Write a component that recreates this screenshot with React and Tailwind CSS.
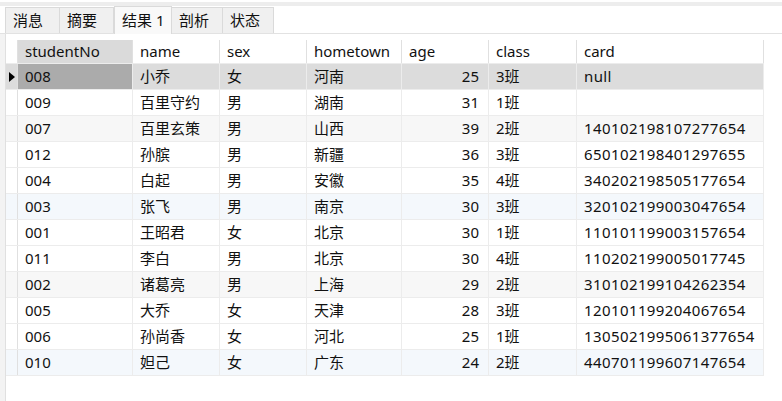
const cols = [
  { key: 'studentNo', w: 'w-[115px]' },
  { key: 'name', w: 'w-[87px]' },
  { key: 'sex', w: 'w-[87px]' },
  { key: 'hometown', w: 'w-[95px]' },
  { key: 'age', w: 'w-[87px]', right: true },
  { key: 'class', w: 'w-[88px]' },
  { key: 'card', w: 'w-[187px]' },
]

const rows = [
  ['008', '小乔', '女', '河南', '25', '3班', 'null'],
  ['009', '百里守约', '男', '湖南', '31', '1班', ''],
  ['007', '百里玄策', '男', '山西', '39', '2班', '140102198107277654'],
  ['012', '孙膑', '男', '新疆', '36', '3班', '650102198401297655'],
  ['004', '白起', '男', '安徽', '35', '4班', '340202198505177654'],
  ['003', '张飞', '男', '南京', '30', '3班', '320102199003047654'],
  ['001', '王昭君', '女', '北京', '30', '1班', '110101199003157654'],
  ['011', '李白', '男', '北京', '30', '4班', '110202199005017745'],
  ['002', '诸葛亮', '男', '上海', '29', '2班', '310102199104262354'],
  ['005', '大乔', '女', '天津', '28', '3班', '120101199204067654'],
  ['006', '孙尚香', '女', '河北', '25', '1班', '1305021995061377654'],
  ['010', '妲己', '女', '广东', '24', '2班', '440701199607147654'],
]

// row tints as seen in the grid
const rowBg = {
  0: 'bg-[#dcdcdc]',
  2: 'bg-[#f7f7f7]',
  5: 'bg-[#f4f8fc]',
  8: 'bg-[#f7f7f7]',
  11: 'bg-[#f4f8fc]',
}

const tabs = ['消息', '摘要', '结果 1', '剖析', '状态']

export default function App() {
  return (
    <div
      className="w-[782px] h-[401px] bg-white overflow-hidden flex flex-col text-[15px] text-[#111]"
      style={{ fontFamily: '"Noto Sans", "Noto Sans CJK SC", sans-serif' }}
    >
      {/* top strip */}
      <div className="h-[2px] shrink-0" />
      <div className="h-[4px] shrink-0 bg-[#ededed]" />

      {/* ── Tabs ── */}
      <div className="h-[28px] shrink-0 flex items-end pl-[5px] border-b border-[#e2e2e2]">
        {tabs.map((t, i) =>
          i === 2 ? (
            <div
              key={t}
              className="h-[28px] w-[58px] -mb-px bg-[#f9f9f9] border border-b-0 border-[#dadada] flex items-center pl-[7px] leading-none"
            >
              {t}
            </div>
          ) : (
            <div
              key={t}
              className={`h-[26px] ${i < 2 ? 'w-[55px]' : 'w-[52px]'} bg-[#f0f0f0] border border-b-0 border-[#dadada] -ml-px first:ml-0 flex items-center pl-[7px] leading-none`}
            >
              {t}
            </div>
          )
        )}
      </div>

      {/* ── Grid area ── */}
      <div className="flex flex-1 min-h-0">
        <div className="w-[6px] shrink-0 bg-[#f3f3f3] border-r border-[#e0e0e0]" />
        <div className="pt-[6px]">
          {/* header */}
          <div className="flex h-[24px] border-b border-[#ececec]">
            <div className="w-[12px] border-r border-[#e0e0e0]" />
            {cols.map((c, i) => (
              <div
                key={c.key}
                className={`${c.w} shrink-0 border-r border-[#e0e0e0] flex items-center pl-[7px] ${i === 0 ? 'bg-[#dadada]' : ''}`}
              >
                {c.key}
              </div>
            ))}
          </div>

          {/* rows */}
          {rows.map((r, ri) => (
            <div key={ri} className={`flex h-[26px] border-b border-[#ececec] ${rowBg[ri] || ''}`}>
              <div className="w-[12px] border-r border-[#e0e0e0] flex items-center justify-center">
                {ri === 0 && (
                  <svg width="6" height="10" viewBox="0 0 6 10">
                    <path d="M0 0L6 5L0 10Z" fill="#000" />
                  </svg>
                )}
              </div>
              {cols.map((c, ci) => (
                <div
                  key={c.key}
                  className={`${c.w} shrink-0 border-r border-[#ececec] flex items-center whitespace-nowrap overflow-visible ${
                    c.right ? 'justify-end pr-[9px]' : 'pl-[7px]'
                  } ${ci === 6 ? 'tracking-[0.4px]' : ''} ${ri === 0 && ci === 0 ? 'bg-[#ababab]' : ''}`}
                >
                  {r[ci]}
                </div>
              ))}
            </div>
          ))}
        </div>
      </div>
    </div>
  )
}
